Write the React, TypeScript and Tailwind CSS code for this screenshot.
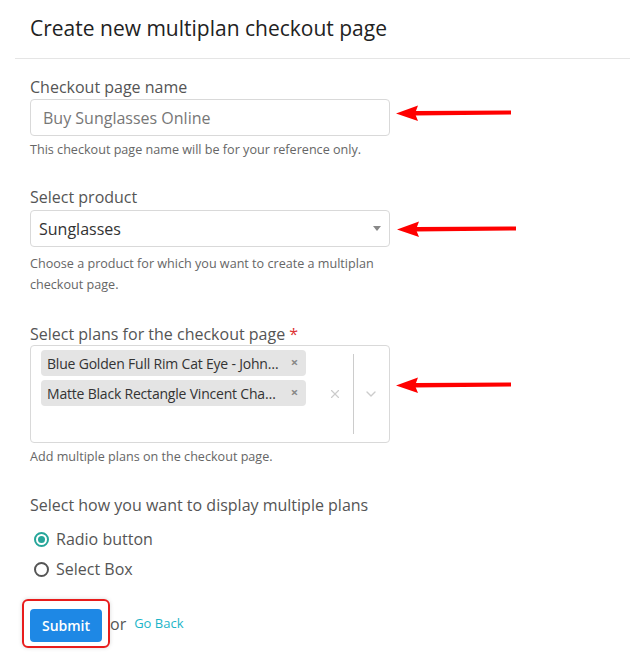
import { ChevronDown, X } from "lucide-react";

function Arrow({ width = 118, className = "" }: { width?: number; className?: string }) {
    return (
        <svg width={width} height="18" viewBox={`0 0 ${width} 18`} className={`shrink-0 ${className}`}>
            <path d={`M20 7 L${width - 2} 6.5 L${width - 2} 10.5 L20 11.5 Z`} fill="#f00" />
            <path d="M1 9.5 L23 1.5 L20 9.5 L23 17 Z" fill="#f00" />
        </svg>
    );
}

function Tag({ label }: { label: string }) {
    return (
        <div className="flex h-[26px] w-[265px] items-center rounded-sm bg-[#e4e4e4] pl-[6px] pr-[8px] text-[14px] tracking-[-0.2px] text-[#333]">
            <span className="min-w-0 flex-1 truncate">{label}</span>
            <span className="ml-[10px] text-[13px] font-bold text-[#888]">×</span>
        </div>
    );
}

export default function App() {
    return (
        <div className="min-h-screen w-[630px] bg-white font-['Open_Sans',sans-serif] text-[#555]">
            <div className="px-[30px] pt-[13px] pb-[15px] text-[21px] leading-[30px] text-[#222]">
                Create new multiplan checkout page
            </div>
            <div className="ml-[15px] border-t border-[#e5e5e5]" />

            <div className="px-[30px] pt-[16px]">
                <div className="text-[16px] leading-[24px]">Checkout page name</div>
                <div className="flex items-center gap-[5px]">
                    <div className="flex h-[37px] w-[360px] items-center rounded border border-[#d9d9d9] px-[12px] text-[16px] text-[#777]">
                        Buy Sunglasses Online
                    </div>
                    <Arrow className="-mt-[9px]" />
                </div>
                <div className="mt-[5px] text-[12.6px] leading-[18px] text-[#666]">
                    This checkout page name will be for your reference only.
                </div>

                <div className="mt-[26px] text-[16px] leading-[24px]">Select product</div>
                <div className="mt-[1px] flex items-center gap-[6px]">
                    <div className="flex h-[37px] w-[360px] items-center justify-between rounded border border-[#d9d9d9] pl-[8px] pr-[8px] text-[16px] text-[#333]">
                        <span>Sunglasses</span>
                        <span className="h-0 w-0 border-x-[4px] border-t-[5px] border-x-transparent border-t-[#888]" />
                    </div>
                    <Arrow width={122} />
                </div>
                <div className="mt-[6px] w-[360px] text-[12.6px] leading-[21px] text-[#666]">
                    Choose a product for which you want to create a multiplan checkout page.
                </div>

                <div className="mt-[27px] text-[16px] leading-[24px]">
                    Select plans for the checkout page <span className="text-[#d33]">*</span>
                </div>
                <div className="-mt-[1px] flex items-center gap-[5px]">
                    <div className="flex h-[98px] w-[360px] rounded border border-[#d9d9d9]">
                        <div className="flex flex-1 flex-col gap-[4px] pl-[10px] pt-[4px]">
                            <Tag label="Blue Golden Full Rim Cat Eye - John Jacobs" />
                            <Tag label="Matte Black Rectangle Vincent Chase Polarized" />
                        </div>
                        <div className="flex items-center pr-[4px]">
                            <X size={14} strokeWidth={2} className="mr-[11px] text-[#ccc]" />
                            <div className="my-[8px] h-[80px] border-l border-[#ccc]" />
                            <ChevronDown size={16} strokeWidth={2} className="ml-[9px] mr-[6px] text-[#ccc]" />
                        </div>
                    </div>
                    <Arrow className="-mt-[18px]" />
                </div>
                <div className="mt-[5px] text-[12.6px] leading-[18px] text-[#666]">
                    Add multiple plans on the checkout page.
                </div>

                <div className="mt-[27px] text-[16px] leading-[24px]">
                    Select how you want to display multiple plans
                </div>
                <div className="mt-[10px] flex flex-col gap-[6px] pl-[4px]">
                    <label className="flex items-center gap-[7px] text-[16px]">
                        <span className="flex h-[15px] w-[15px] items-center justify-center rounded-full border-2 border-[#26a69a]">
                            <span className="h-[7px] w-[7px] rounded-full bg-[#26a69a]" />
                        </span>
                        Radio button
                    </label>
                    <label className="flex items-center gap-[7px] text-[16px]">
                        <span className="h-[15px] w-[15px] rounded-full border-2 border-[#555]" />
                        Select Box
                    </label>
                </div>

                <div className="mt-[18px] -ml-[8px] flex items-center">
                    <div className="rounded-md border-2 border-[#e81c1c] px-[6px] pt-[8px] pb-[4px] shadow-[0_0_4px_rgba(0,0,0,0.15)]">
                        <button className="block h-[33px] w-[72px] rounded bg-[#1e88e5] text-[14px] font-semibold text-white">
                            Submit
                        </button>
                    </div>
                    <span className="text-[16px] text-[#555]">or</span>
                    <a className="ml-[8px] text-[13px] text-[#1bb5c8]">Go Back</a>
                </div>
            </div>
        </div>
    );
}
